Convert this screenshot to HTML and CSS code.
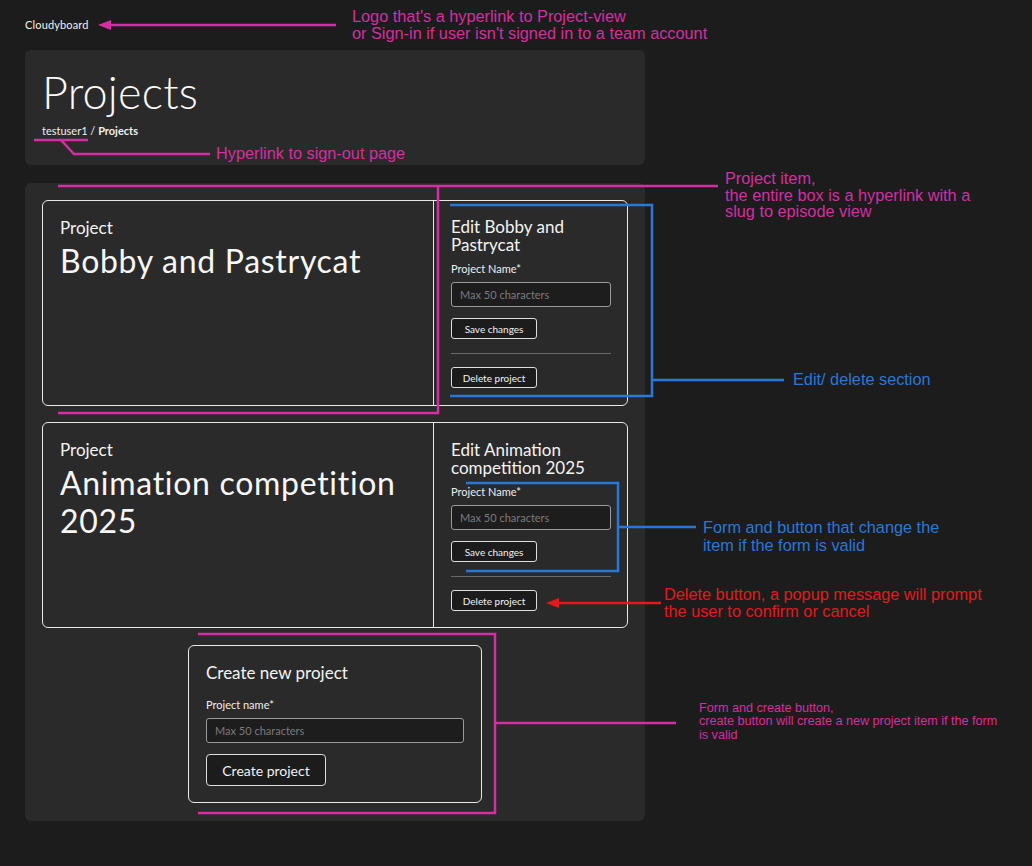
FILE: index.html
```html
<!DOCTYPE html>
<html lang="en">
<head>
<meta charset="utf-8">
<title>Cloudyboard – Projects</title>
<link rel="stylesheet" href="styles.css">
</head>
<body>
<div class="page">
  <a class="logo" href="#">Cloudyboard</a>

  <header class="header">
    <h1 class="title">Projects</h1>
    <div class="crumbs"><a href="#" class="crumb-user">testuser1</a> / <strong>Projects</strong></div>
  </header>

  <main class="main">
    <div class="card">
      <a class="card-link" href="#">
        <div class="kicker">Project</div>
        <div class="proj-name">Bobby and Pastrycat</div>
      </a>
      <div class="card-edit">
        <div class="edit-title">Edit Bobby and Pastrycat</div>
        <label class="label">Project Name*</label>
        <input class="input" type="text" placeholder="Max 50 characters">
        <button class="btn">Save changes</button>
        <hr class="rule">
        <button class="btn">Delete project</button>
      </div>
    </div>

    <div class="card">
      <a class="card-link" href="#">
        <div class="kicker">Project</div>
        <div class="proj-name">Animation competition 2025</div>
      </a>
      <div class="card-edit">
        <div class="edit-title">Edit Animation competition 2025</div>
        <label class="label">Project Name*</label>
        <input class="input" type="text" placeholder="Max 50 characters">
        <button class="btn">Save changes</button>
        <hr class="rule">
        <button class="btn">Delete project</button>
      </div>
    </div>

    <form class="create">
      <div class="create-title">Create new project</div>
      <label class="label create-label">Project name*</label>
      <input class="input create-input" type="text" placeholder="Max 50 characters">
      <button class="btn btn-big" type="button">Create project</button>
    </form>
  </main>
</div>

<svg class="overlay" width="1032" height="866" viewBox="0 0 1032 866">
  <g fill="none" stroke-width="2.5" stroke-linecap="butt">
    <line x1="336" y1="25" x2="108" y2="25" class="mg"/>
    <polyline points="34,140 88,140" class="mg"/>
    <polyline points="61,140 74,154 210,154" class="mg"/>
    <polyline points="58,186 718,186" class="mg"/>
    <polyline points="438,186 438,413 58,413" class="mg"/>
    <polyline points="450,205 652,205 652,396 450,396" class="bl"/>
    <line x1="652" y1="380" x2="784" y2="380" class="bl"/>
    <polyline points="466,483 618,483 618,571 466,571" class="bl"/>
    <line x1="618" y1="527" x2="696" y2="527" class="bl"/>
    <line x1="661" y1="603" x2="556" y2="603" class="rd"/>
    <polyline points="198,634 495,634 495,813 198,813" class="mg"/>
    <line x1="495" y1="723" x2="676" y2="723" class="mg"/>
  </g>
  <polygon points="98,25 111,20 111,30" class="mg-fill"/>
  <polygon points="546,603 559,598 559,608" class="rd-fill"/>
</svg>

<div class="note note-mg note-logo">Logo that's a hyperlink to Project-view<br>or Sign-in if user isn't signed in to a team account</div>
<div class="note note-mg note-signout">Hyperlink to sign-out page</div>
<div class="note note-mg note-item">Project item,<br>the entire box is a hyperlink with a<br>slug to episode view</div>
<div class="note note-bl note-edit">Edit/ delete section</div>
<div class="note note-bl note-form">Form and button that change the<br>item if the form is valid</div>
<div class="note note-rd note-delete">Delete button, a popup message will prompt<br>the user to confirm or cancel</div>
<div class="note note-mg note-small">Form and create button,<br>create button will create a new project item if the form<br>is valid</div>
</body>
</html>
```

FILE: styles.css
```css
* { box-sizing: border-box; }

html, body {
  margin: 0;
  padding: 0;
}

body {
  background: #1c1c1c;
  color: #f2f2f2;
  font-family: "Lato", "Noto Sans", sans-serif;
  width: 1032px;
  height: 866px;
  position: relative;
  overflow: hidden;
}

a { color: inherit; text-decoration: none; }

.page {
  padding: 18px 0 0 25px;
  width: 645px;
  display: flex;
  flex-direction: column;
}

.logo {
  font-size: 11px;
  line-height: 14px;
  height: 14px;
  color: #f0f0f0;
  margin-bottom: 18px;
  letter-spacing: 0.15px;
}

.header {
  background: #2a2a2a;
  border-radius: 6px;
  height: 115px;
  padding: 17px 17px 0 17px;
}

.title {
  margin: 0;
  font-weight: 300;
  font-size: 45px;
  line-height: 50px;
  letter-spacing: 0.2px;
  color: #fafafa;
}

.crumbs {
  margin-top: 7px;
  font-size: 11px;
  line-height: 14px;
  color: #f0f0f0;
}
.crumbs strong { font-weight: 700; }

.main {
  margin-top: 18px;
  background: #2a2a2a;
  border-radius: 6px;
  padding: 17px 17px 18px 17px;
  display: flex;
  flex-direction: column;
  gap: 16px;
}

.card {
  display: grid;
  grid-template-columns: 391px 1fr;
  border: 1px solid #e8e8e8;
  border-radius: 6px;
  min-height: 206px;
}

.card-link {
  display: block;
  padding: 17px 17px;
  border-right: 1px solid #e8e8e8;
}

.kicker {
  font-size: 17px;
  line-height: 20px;
  color: #f4f4f4;
}

.proj-name {
  font-size: 32px;
  line-height: 38px;
  margin-top: 4px;
  color: #f7f7f7;
  letter-spacing: 0.7px;
}

.card-edit {
  padding: 17px 16px 16px 17px;
  display: flex;
  flex-direction: column;
  align-items: flex-start;
}

.card + .card .card-edit { padding-top: 18px; }

.edit-title {
  font-size: 17px;
  line-height: 18px;
  width: 160px;
  color: #f4f4f4;
}

.label {
  display: block;
  font-size: 11px;
  line-height: 14px;
  margin-top: 8px;
  color: #eeeeee;
}

.input {
  margin-top: 6px;
  width: 160px;
  height: 25px;
  background: #1d1d1d;
  border: 1px solid #9a9a9a;
  border-radius: 3px;
  padding: 0 8px;
  font-family: inherit;
  font-size: 11px;
  color: #ddd;
}
.input::placeholder { color: #7b7b7b; }

.btn {
  margin-top: 11px;
  height: 21px;
  width: 86px;
  background: #1c1c1c;
  border: 1px solid #dedede;
  border-radius: 3px;
  color: #f2f2f2;
  font-family: inherit;
  font-size: 10px;
  padding: 0;
}

.rule {
  width: 160px;
  margin: 14px 0 0 0;
  border: 0;
  border-top: 1px solid #6a6a6a;
  height: 0;
}
.rule + .btn { margin-top: 13px; }

.create {
  align-self: center;
  width: 294px;
  margin: 1px 0 0 0;
  border: 1px solid #e8e8e8;
  border-radius: 6px;
  padding: 17px 17px 16px 17px;
  display: flex;
  flex-direction: column;
  align-items: flex-start;
}

.create-title {
  font-size: 17px;
  line-height: 20px;
  color: #f4f4f4;
}

.create-label { margin-top: 15px; }

.create-input { width: 258px; }

.btn-big {
  width: 120px;
  height: 32px;
  font-size: 14px;
  border-radius: 4px;
}

/* ---------- annotation overlay ---------- */
.overlay {
  position: absolute;
  left: 0;
  top: 0;
  pointer-events: none;
}
.mg { stroke: #d42ea2; }
.bl { stroke: #2878d8; }
.rd { stroke: #e31a1c; }
.mg-fill { fill: #d42ea2; }
.rd-fill { fill: #e31a1c; }

.note {
  position: absolute;
  font-family: "Liberation Sans", Arial, sans-serif;
  font-size: 16.3px;
  line-height: 17px;
  white-space: nowrap;
  pointer-events: none;
}
.note-mg { color: #d42ea2; }
.note-bl { color: #2878d8; }
.note-rd { color: #e31a1c; }

.note-logo { left: 352px; top: 8px; }
.note-signout { left: 216px; top: 145px; }
.note-item { left: 725px; top: 170px; line-height: 16.5px; }
.note-edit { left: 793px; top: 371px; }
.note-form { left: 703px; top: 518px; line-height: 18px; }
.note-delete { left: 664px; top: 586px; }
.note-small { left: 699px; top: 702px; font-size: 12.6px; line-height: 13.4px; }
```
